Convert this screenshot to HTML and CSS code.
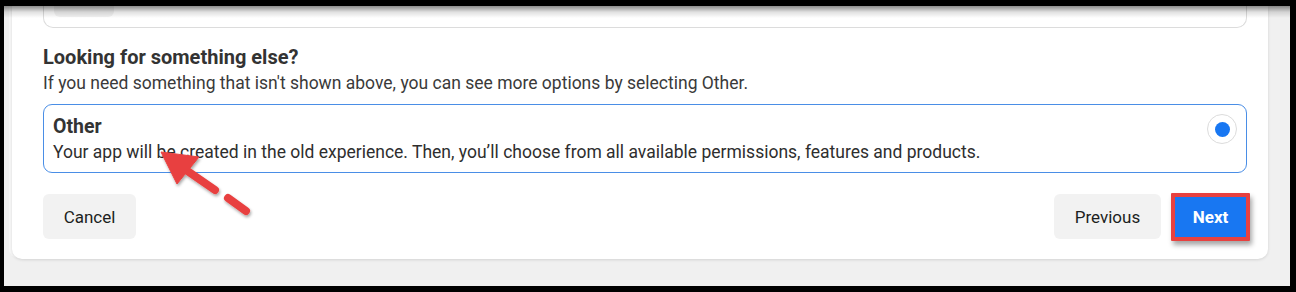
FILE: index.html
```html
<!DOCTYPE html>
<html lang="en">
<head>
<meta charset="utf-8">
<title>Create app</title>
<link rel="stylesheet" href="styles.css">
</head>
<body>
<div class="screen">
  <div class="card">
    <div class="prev-option"><div class="prev-icon"></div></div>
    <h2 class="title">Looking for something else?</h2>
    <p class="subtitle">If you need something that isn't shown above, you can see more options by selecting Other.</p>
    <div class="option selected">
      <div class="option-text">
        <div class="option-title">Other</div>
        <div class="option-desc">Your app will be created in the old experience. Then, you’ll choose from all available permissions, features and products.</div>
      </div>
      <div class="radio"><div class="radio-dot"></div></div>
    </div>
    <div class="actions">
      <button class="btn btn-secondary">Cancel</button>
      <div class="actions-right">
        <button class="btn btn-secondary btn-prev">Previous</button>
        <button class="btn btn-primary">Next</button>
      </div>
    </div>
  </div>
  <div class="top-shadow"></div>
</div>
<svg class="arrow" width="1296" height="292" viewBox="0 0 1296 292">
  <defs>
    <filter id="sh" x="-20%" y="-20%" width="140%" height="140%">
      <feDropShadow dx="1" dy="2" stdDeviation="1.5" flood-color="#000" flood-opacity="0.35"/>
    </filter>
  </defs>
  <g filter="url(#sh)" fill="#e8413f" stroke="#e8413f">
    <line x1="246" y1="211" x2="228" y2="198" stroke-width="8" stroke-linecap="round"/>
    <line x1="215" y1="190" x2="186" y2="170" stroke-width="8" stroke-linecap="round"/>
    <polygon points="161,152 199,157 177,184" stroke-width="1" stroke-linejoin="round"/>
  </g>
</svg>
</body>
</html>
```

FILE: styles.css
```css
html, body {
  margin: 0;
  padding: 0;
}
body {
  width: 1296px;
  height: 292px;
  background: #000;
  overflow: hidden;
  position: relative;
  font-family: Roboto, "Liberation Sans", Arial, sans-serif;
}
.screen {
  position: relative;
  margin: 6px 6px 0 4px;
  height: 280px;
  background: #f0f0f0;
  overflow: hidden;
}
.top-shadow {
  position: absolute;
  top: 0;
  left: 0;
  right: 0;
  height: 12px;
  background: linear-gradient(rgba(0,0,0,0.45), rgba(0,0,0,0.12) 50%, rgba(0,0,0,0));
  pointer-events: none;
}
.card {
  margin-left: 8px;
  width: 1256px;
  height: 253px;
  box-sizing: border-box;
  background: #fff;
  border-radius: 0 0 10px 10px;
  box-shadow: 0 1px 3px rgba(0,0,0,0.12), -4px 0 0 -1px #f7f7f7;
  padding: 0 21px 0 31px;
  display: flex;
  flex-direction: column;
}
.prev-option {
  height: 22px;
  box-sizing: border-box;
  border: 1px solid #dcdcdc;
  border-top: none;
  border-radius: 0 0 10px 10px;
  padding-left: 10px;
}
.prev-icon {
  width: 60px;
  height: 11px;
  background: #f2f2f2;
  border-radius: 0 0 6px 6px;
}
.title {
  margin: 17px 0 0;
  font-size: 20px;
  line-height: 24px;
  font-weight: 700;
  color: #333;
}
.subtitle {
  margin: 4px 0 0;
  font-size: 17.5px;
  line-height: 21px;
  color: #3a3a3a;
}
.option {
  margin-top: 10px;
  height: 69px;
  box-sizing: border-box;
  border: 1px solid #4a8ee6;
  border-radius: 9px;
  padding: 10px 9px 8px 9px;
  display: flex;
  align-items: flex-start;
}
.option-text {
  flex: 1;
}
.option-title {
  font-size: 19.5px;
  line-height: 24px;
  font-weight: 700;
  color: #333;
}
.option-desc {
  margin-top: 3px;
  font-size: 17.5px;
  line-height: 21px;
  color: #2e2e2e;
}
.radio {
  margin-top: -1px;
  width: 30px;
  height: 30px;
  box-sizing: border-box;
  border: 1px solid #dcdcdc;
  border-radius: 50%;
  display: flex;
  align-items: center;
  justify-content: center;
}
.radio-dot {
  width: 15px;
  height: 15px;
  border-radius: 50%;
  background: #1877f2;
}
.actions {
  margin-top: 21px;
  display: flex;
  justify-content: space-between;
  align-items: flex-start;
}
.actions-right {
  display: flex;
  align-items: flex-start;
  gap: 10px;
  margin-right: -3px;
}
.btn {
  font-family: Roboto, "Liberation Sans", Arial, sans-serif;
  font-size: 17px;
  border: none;
  border-radius: 6px;
  height: 45px;
  padding: 0;
  cursor: pointer;
}
.btn-secondary {
  background: #f2f2f2;
  color: #1c1e21;
  width: 93px;
}
.btn-prev {
  width: 107px;
}
.btn-primary {
  margin-top: -1px;
  width: 79px;
  height: 48px;
  box-sizing: border-box;
  border: 4px solid #e8413f;
  border-radius: 1px;
  background: #1877f2;
  color: #fff;
  font-weight: 700;
  box-shadow: 2px 4px 5px rgba(0,0,0,0.35);
}
.arrow {
  position: absolute;
  left: 0;
  top: 0;
  pointer-events: none;
}
```
